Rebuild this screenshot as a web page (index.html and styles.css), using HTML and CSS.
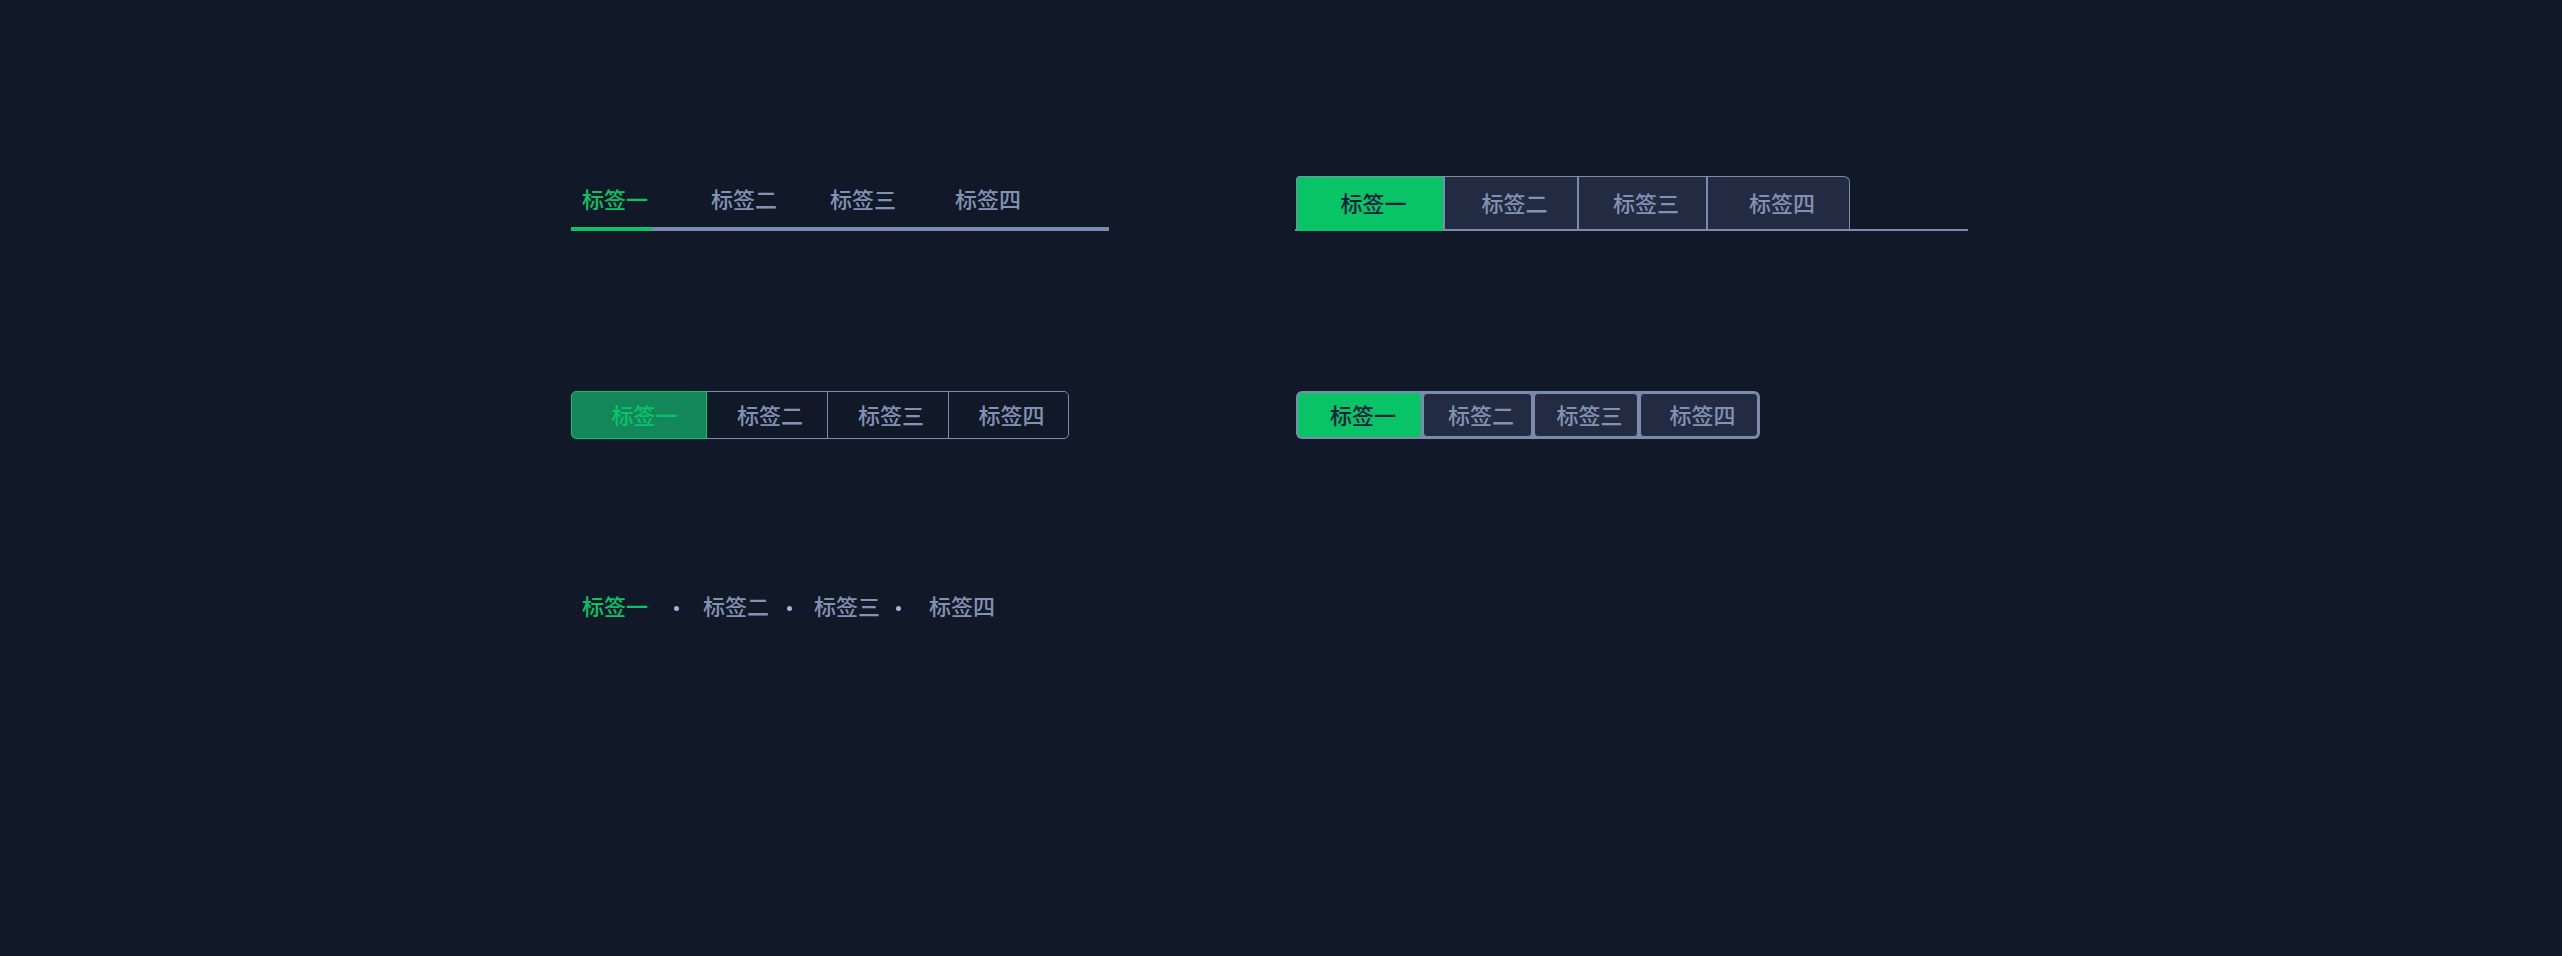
FILE: index.html
```html
<!DOCTYPE html>
<html lang="zh">
<head>
<meta charset="utf-8">
<title>Tabs</title>
<link rel="stylesheet" href="styles.css">
</head>
<body>
<main class="demo">
  <div class="line-tabs">
    <div class="line-tab is-active">标签一</div>
    <div class="line-tab">标签二</div>
    <div class="line-tab">标签三</div>
    <div class="line-tab">标签四</div>
  </div>

  <div class="card-tabs">
    <div class="card-tab is-active">标签一</div>
    <div class="card-tab">标签二</div>
    <div class="card-tab">标签三</div>
    <div class="card-tab">标签四</div>
  </div>

  <div class="seg-tabs">
    <div class="seg-tab is-active">标签一</div>
    <div class="seg-tab">标签二</div>
    <div class="seg-tab">标签三</div>
    <div class="seg-tab">标签四</div>
  </div>

  <div class="pill-tabs">
    <div class="pill-tab is-active">标签一</div>
    <div class="pill-tab">标签二</div>
    <div class="pill-tab">标签三</div>
    <div class="pill-tab">标签四</div>
  </div>

  <div class="dot-tabs">
    <div class="dot-tab is-active">标签一</div>
    <span class="dot"></span>
    <div class="dot-tab">标签二</div>
    <span class="dot"></span>
    <div class="dot-tab">标签三</div>
    <span class="dot"></span>
    <div class="dot-tab">标签四</div>
  </div>
</main>
</body>
</html>
```

FILE: styles.css
```css
html, body {
  margin: 0;
  padding: 0;
  background: #111827;
}

body {
  width: 2562px;
  height: 956px;
  font-family: "Noto Sans CJK SC", "Noto Sans", sans-serif;
  font-size: 22px;
  font-weight: 500;
  color: #8391b3;
}

.demo {
  display: grid;
  grid-template-columns: 724px 724px;
  grid-template-rows: 220px 187px auto;
  padding: 171px 0 0 571px;
  align-items: start;
}

/* ---------- line tabs ---------- */
.line-tabs {
  display: flex;
  width: 538px;
  border-bottom: 4px solid #7c8aab;
}

.line-tab {
  position: relative;
  height: 56px;
  line-height: 54px;
  padding: 0 10px;
  white-space: nowrap;
}

.line-tab:nth-child(1) { padding-left: 11px; }
.line-tab:nth-child(2) { margin-left: 43px; }
.line-tab:nth-child(3) { margin-left: 33px; }
.line-tab:nth-child(4) { margin-left: 39px; }

.line-tab.is-active {
  color: #08c466;
}

.line-tab.is-active::after {
  content: "";
  position: absolute;
  left: 0;
  bottom: -4px;
  width: 81px;
  height: 4px;
  background: #08c466;
}

/* ---------- card tabs ---------- */
.card-tabs {
  display: flex;
  align-items: flex-end;
  width: 672px;
  margin-top: 5px;
  padding-left: 1px;
  border-bottom: 2px solid #7c8aab;
}

.card-tab {
  box-sizing: border-box;
  height: 53px;
  line-height: 50px;
  padding-left: 7px;
  text-align: center;
  background: #222b41;
  border: 1px solid #7c8aab;
  border-bottom: 0;
  white-space: nowrap;
}

.card-tab:nth-child(1) { width: 148px; border-top-left-radius: 4px; }
.card-tab:nth-child(2) { width: 134px; }
.card-tab:nth-child(3) { width: 129px; }
.card-tab:nth-child(4) { width: 143px; border-top-right-radius: 6px; }

.card-tab.is-active {
  height: 55px;
  margin-bottom: -2px;
  padding-bottom: 2px;
  background: #08c466;
  color: #13203a;
}

/* ---------- segmented (outlined) ---------- */
.seg-tabs {
  display: flex;
  height: 48px;
}

.seg-tab {
  box-sizing: border-box;
  height: 48px;
  line-height: 44px;
  padding-left: 6px;
  text-align: center;
  border: 1px solid #7c8aab;
  margin-left: -1px;
  white-space: nowrap;
}

.seg-tab:nth-child(1) { width: 136px; margin-left: 0; border-radius: 5px 0 0 5px; }
.seg-tab:nth-child(2) { width: 122px; }
.seg-tab:nth-child(3) { width: 122px; }
.seg-tab:nth-child(4) { width: 121px; border-radius: 0 5px 5px 0; }

.seg-tab.is-active {
  position: relative;
  z-index: 1;
  padding-left: 11px;
  background: #14875a;
  border-color: #08c466;
  color: #08c466;
}

/* ---------- pill (filled group) ---------- */
.pill-tabs {
  display: flex;
  gap: 2px;
  width: fit-content;
  margin-left: 1px;
  padding: 2px;
  background: #7c8aab;
  border-radius: 6px;
}

.pill-tab {
  box-sizing: border-box;
  height: 44px;
  line-height: 40px;
  padding-left: 7px;
  text-align: center;
  background: #222b41;
  border: 1px solid #7c8aab;
  border-radius: 4px;
  white-space: nowrap;
}

.pill-tab:nth-child(1) { width: 123px; }
.pill-tab:nth-child(2) { width: 109px; }
.pill-tab:nth-child(3) { width: 104px; }
.pill-tab:nth-child(4) { width: 118px; }

.pill-tab.is-active {
  background: #08c466;
  border-color: #08c466;
  color: #13203a;
}

/* ---------- dot separated ---------- */
.dot-tabs {
  display: flex;
  align-items: center;
}

.dot-tab {
  height: 56px;
  line-height: 54px;
  padding: 0 10px;
  white-space: nowrap;
}

.dot-tab.is-active {
  color: #08c466;
}

.dot {
  width: 5px;
  height: 5px;
  margin-top: 5px;
  border-radius: 50%;
  background: #a3b4dc;
}

.dot-tabs > :nth-child(1) { padding-left: 11px; }
.dot-tabs > :nth-child(2) { margin-left: 16px; }
.dot-tabs > :nth-child(3) { margin-left: 14px; }
.dot-tabs > :nth-child(4) { margin-left: 8px; }
.dot-tabs > :nth-child(5) { margin-left: 12px; }
.dot-tabs > :nth-child(6) { margin-left: 6px; }
.dot-tabs > :nth-child(7) { margin-left: 18px; }
```
